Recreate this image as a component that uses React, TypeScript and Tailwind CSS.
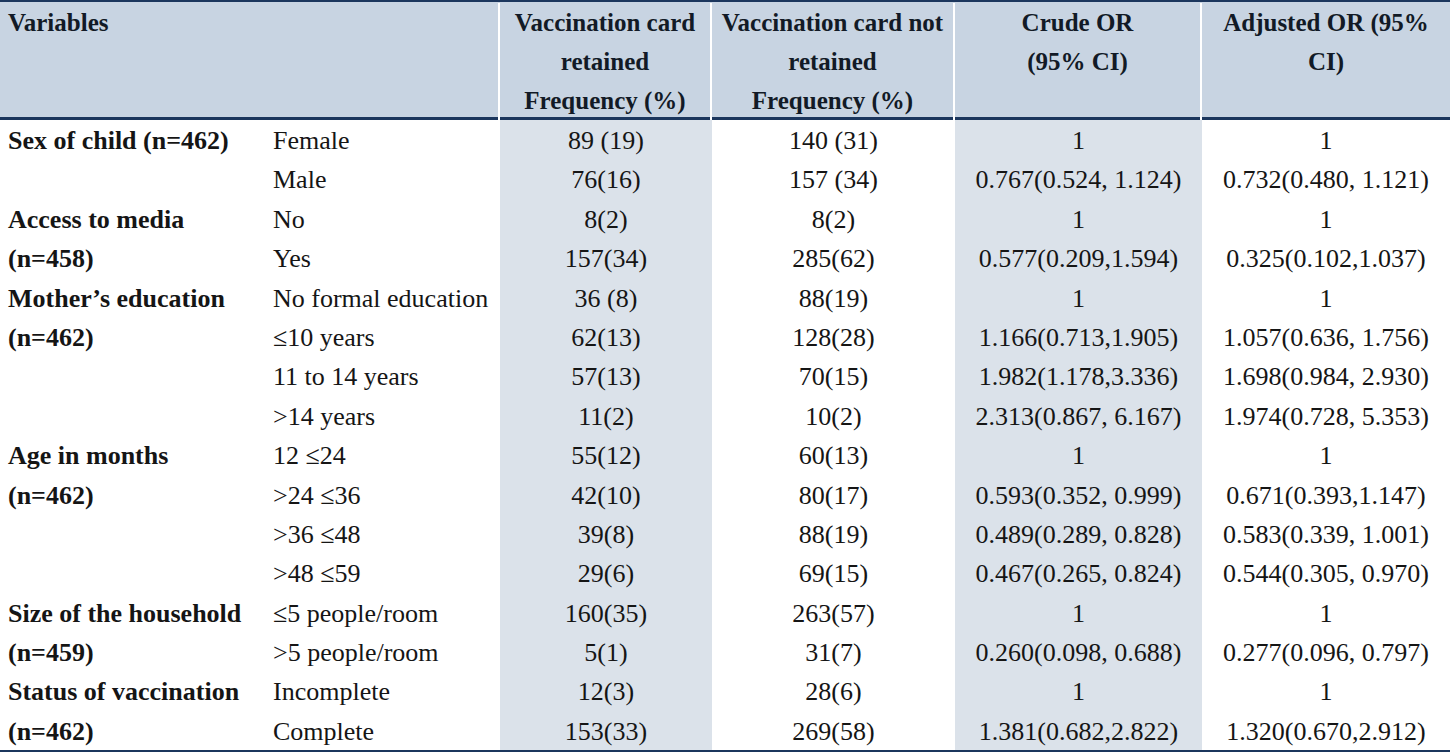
type Row = {
  label?: string[];
  span?: number;
  level: string;
  kept: string;
  notKept: string;
  crude: string;
  adjusted: string;
};

const rows: Row[] = [
  { label: ['Sex of child (n=462)'], span: 2, level: 'Female', kept: '89 (19)', notKept: '140 (31)', crude: '1', adjusted: '1' },
  { level: 'Male', kept: '76(16)', notKept: '157 (34)', crude: '0.767(0.524, 1.124)', adjusted: '0.732(0.480, 1.121)' },
  { label: ['Access to media', '(n=458)'], span: 2, level: 'No', kept: '8(2)', notKept: '8(2)', crude: '1', adjusted: '1' },
  { level: 'Yes', kept: '157(34)', notKept: '285(62)', crude: '0.577(0.209,1.594)', adjusted: '0.325(0.102,1.037)' },
  { label: ['Mother\u2019s education', '(n=462)'], span: 4, level: 'No formal education', kept: '36 (8)', notKept: '88(19)', crude: '1', adjusted: '1' },
  { level: '\u226410 years', kept: '62(13)', notKept: '128(28)', crude: '1.166(0.713,1.905)', adjusted: '1.057(0.636, 1.756)' },
  { level: '11 to 14 years', kept: '57(13)', notKept: '70(15)', crude: '1.982(1.178,3.336)', adjusted: '1.698(0.984, 2.930)' },
  { level: '>14 years', kept: '11(2)', notKept: '10(2)', crude: '2.313(0.867, 6.167)', adjusted: '1.974(0.728, 5.353)' },
  { label: ['Age in months', '(n=462)'], span: 4, level: '12 \u226424', kept: '55(12)', notKept: '60(13)', crude: '1', adjusted: '1' },
  { level: '>24 \u226436', kept: '42(10)', notKept: '80(17)', crude: '0.593(0.352, 0.999)', adjusted: '0.671(0.393,1.147)' },
  { level: '>36 \u226448', kept: '39(8)', notKept: '88(19)', crude: '0.489(0.289, 0.828)', adjusted: '0.583(0.339, 1.001)' },
  { level: '>48 \u226459', kept: '29(6)', notKept: '69(15)', crude: '0.467(0.265, 0.824)', adjusted: '0.544(0.305, 0.970)' },
  { label: ['Size of the household', '(n=459)'], span: 2, level: '\u22645 people/room', kept: '160(35)', notKept: '263(57)', crude: '1', adjusted: '1' },
  { level: '>5 people/room', kept: '5(1)', notKept: '31(7)', crude: '0.260(0.098, 0.688)', adjusted: '0.277(0.096, 0.797)' },
  { label: ['Status of vaccination', '(n=462)'], span: 2, level: 'Incomplete', kept: '12(3)', notKept: '28(6)', crude: '1', adjusted: '1' },
  { level: 'Complete', kept: '153(33)', notKept: '269(58)', crude: '1.381(0.682,2.822)', adjusted: '1.320(0.670,2.912)' },
];

const spanClass: Record<number, string> = {
  2: 'row-span-2',
  4: 'row-span-4',
};

export default function App() {
  return (
    <div
      className="w-[1450px] h-[753px] bg-white text-[#151515] text-[26px] overflow-hidden"
      style={{ fontFamily: '"Liberation Serif", "Times New Roman", serif' }}
    >
      {/* Header */}
      <div className="border-t-2 border-[#1b365d] bg-[#c8d4e2] grid grid-cols-[500px_212px_243px_247px_248px] h-[120px] border-b-[3px] border-b-[#1b365d] font-bold text-[25px] text-[#121a26] leading-[39px] pt-px">
        <div className="px-2 border-r-2 border-white">Variables</div>
        <div className="text-center border-r-2 border-white whitespace-nowrap">
          Vaccination card
          <br />
          retained
          <br />
          Frequency (%)
        </div>
        <div className="text-center border-r-2 border-white whitespace-nowrap">
          Vaccination card not
          <br />
          retained
          <br />
          Frequency (%)
        </div>
        <div className="text-center border-r-2 border-white">
          Crude OR
          <br />
          (95% CI)
        </div>
        <div className="text-center whitespace-nowrap">
          Adjusted OR (95%
          <br />
          CI)
        </div>
      </div>

      {/* Body */}
      <div className="grid grid-cols-[265px_235px_212px_243px_247px_248px] auto-rows-[39.4px] leading-[39.4px] border-b-2 border-[#1b365d]">
        {rows.map((r, i) => (
          <Cells key={i} row={r} />
        ))}
      </div>
    </div>
  );
}

function Cells({ row }: { row: Row }) {
  return (
    <>
      {row.label && (
        <div className={`${spanClass[row.span ?? 2]} px-2 pt-px font-bold whitespace-nowrap`}>
          {row.label.map((l, j) => (
            <div key={j}>{l}</div>
          ))}
        </div>
      )}
      <div className="col-start-2 px-2 pt-px whitespace-nowrap">{row.level}</div>
      <div className="bg-[#dbe2ea] pt-px text-center whitespace-nowrap">{row.kept}</div>
      <div className="pt-px text-center whitespace-nowrap">{row.notKept}</div>
      <div className="bg-[#dbe2ea] pt-px text-center whitespace-nowrap">{row.crude}</div>
      <div className="pt-px text-center whitespace-nowrap">{row.adjusted}</div>
    </>
  );
}
